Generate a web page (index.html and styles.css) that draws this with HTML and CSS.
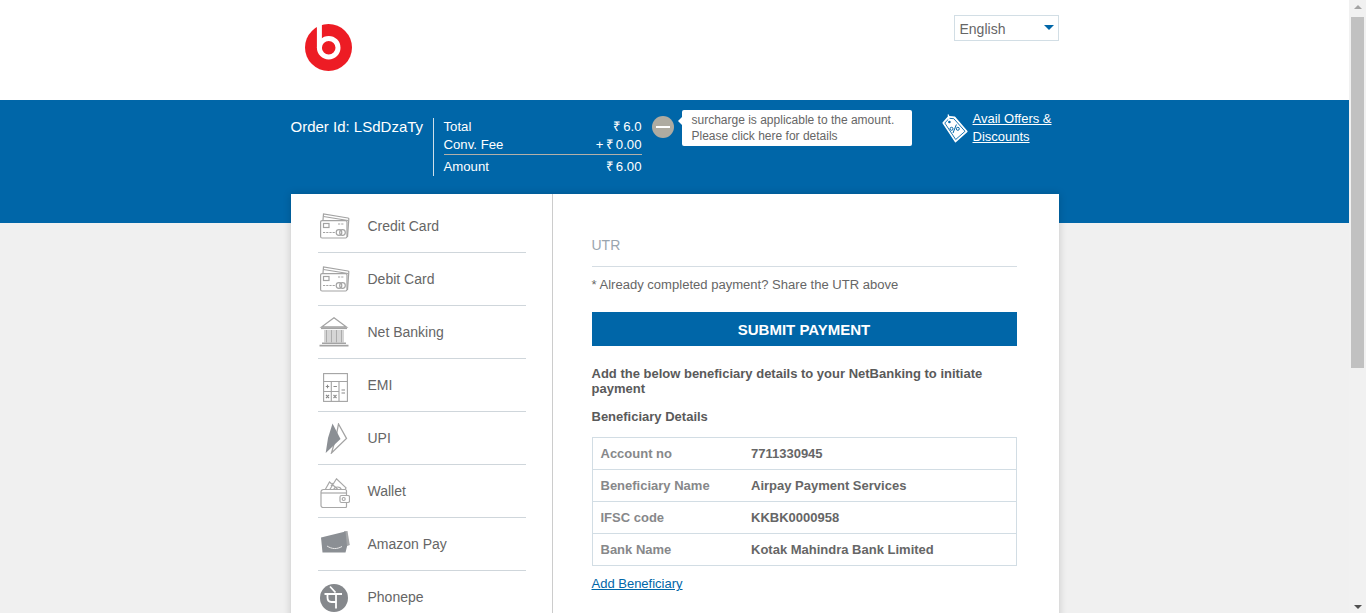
FILE: index.html
```html
<!DOCTYPE html>
<html lang="en">
<head>
<meta charset="utf-8">
<title>Payment</title>
<link rel="stylesheet" href="styles.css">
</head>
<body>
<div class="app">
  <div class="page">
    <header class="top">
      <div class="wrap top-inner">
        <svg class="logo" viewBox="0 0 47 47" aria-label="Logo">
          <circle cx="23.500" cy="23.500" r="23.500" fill="#ed1c24"/>
          <circle cx="23.700" cy="23.700" r="9.300" fill="none" stroke="#fff" stroke-width="5"/>
          <path d="M14.400 0v24" stroke="#fff" stroke-width="5" fill="none"/>
        </svg>
        <div class="lang"><span>English</span><i class="caret"></i></div>
      </div>
    </header>
    <section class="band">
      <div class="wrap band-inner">
        <div class="order">Order Id: LSdDzaTy</div>
        <div class="totals">
          <div class="t-row"><span>Total</span><span class="t-val">₹ 6.0</span></div>
          <div class="t-row t-fee"><span>Conv. Fee</span><span class="t-val">+ ₹ 0.00</span></div>
          <div class="t-row t-amt"><span>Amount</span><span class="t-val">₹ 6.00</span></div>
        </div>
        <div class="minus"><i></i></div>
        <div class="tip">surcharge is applicable to the amount.<br>Please click here for details</div>
        <div class="offers">
          <svg class="tag" viewBox="0 0 26 29">
            <path d="M1 8.800 6.700 2.500 12.500 3 25 17.500 13.500 27.800Z" fill="#fff" stroke="#fff" stroke-width="1.200" stroke-linejoin="round"/>
            <path d="M2.800 9 7.300 4.300 11.800 4.700 23 17.300 13.700 25.500Z" fill="none" stroke="#0066a8" stroke-width=".9"/>
            <path d="M6.300 .5 7.200 7.500" stroke="#fff" stroke-width="1.400" fill="none"/>
            <circle cx="7.400" cy="8" r="1.300" fill="#0066a8"/>
            <circle cx="9.500" cy="14.800" r="1.500" fill="none" stroke="#0066a8"/>
            <circle cx="15.800" cy="14.800" r="1.500" fill="none" stroke="#0066a8"/>
            <path d="M11 19 14.400 10.500" stroke="#0066a8" fill="none"/>
          </svg>
          <a class="offers-link" href="#">Avail Offers &amp;<br>Discounts</a>
        </div>
      </div>
    </section>
    <main class="wrap card">
      <nav class="nav">
        <div class="nav-item">
          <span class="ico"><svg width="30" height="26" viewBox="0 0 30 26"><g fill="none" stroke="#a3a3a3" stroke-width="1.200"><path d="M3 7 3.500 1 28 5a1 1 0 0 1 .8 1.200L27.500 24"/><path d="M3.500 3.500 28 7.500"/><rect x=".6" y="7.600" width="26.400" height="17.400" rx="1.500" fill="#fff"/><rect x="3.500" y="10.500" width="5.500" height="4"/><path d="M18 11h6M3 19.500h12" stroke-dasharray="2.200 1"/><circle cx="19" cy="19.500" r="2.800"/><circle cx="22.500" cy="19.500" r="2.800"/></g></svg></span>
          <span>Credit Card</span>
        </div>
        <div class="nav-item">
          <span class="ico"><svg width="30" height="26" viewBox="0 0 30 26"><g fill="none" stroke="#a3a3a3" stroke-width="1.200"><path d="M3 7 3.500 1 28 5a1 1 0 0 1 .8 1.200L27.500 24"/><path d="M3.500 3.500 28 7.500"/><rect x=".6" y="7.600" width="26.400" height="17.400" rx="1.500" fill="#fff"/><rect x="3.500" y="10.500" width="5.500" height="4"/><path d="M18 11h6M3 19.500h12" stroke-dasharray="2.200 1"/><circle cx="19" cy="19.500" r="2.800"/><circle cx="22.500" cy="19.500" r="2.800"/></g></svg></span>
          <span>Debit Card</span>
        </div>
        <div class="nav-item">
          <span class="ico ico-bank"><svg width="30" height="30" viewBox="0 0 30 30"><path d="M15 .8 27.500 10H2.500Z" fill="none" stroke="#a3a3a3" stroke-width="1.300"/><path d="M2 10.500h26v1.600H2Z" fill="#a3a3a3"/><path d="M6 13v12.500M7.500 13v12.500M9 13v12.500M11 13v12.500M12.500 13v12.500M14 13v12.500M16 13v12.500M17.500 13v12.500M19 13v12.500M21 13v12.500M22.500 13v12.500M24 13v12.500" stroke="#a3a3a3" stroke-width=".9"/><path d="M3 25.500h24v1.500H3ZM.5 27.800h29v1.700H.5Z" fill="#a3a3a3"/></svg></span>
          <span>Net Banking</span>
        </div>
        <div class="nav-item">
          <span class="ico ico-calc"><svg width="25" height="29" viewBox="0 0 25 29"><g fill="none" stroke="#a3a3a3" stroke-width="1.100"><rect x=".6" y=".6" width="23.800" height="27.800"/><path d="M.6 8.500h23.800M8.300 8.500v20M16 8.500v20M.6 18.500H16"/><path d="M2.800 13.500h3.400M4.500 11.800v3.400M10.500 13.500h3.400M3 22l3 3M6 22l-3 3M10.500 22l3 3M13.500 22l-3 3M18.500 17h3.500M18.500 20h3.500" stroke="#8a8a8a"/></g></svg></span>
          <span>EMI</span>
        </div>
        <div class="nav-item">
          <span class="ico ico-upi"><svg width="23" height="31" viewBox="0 0 23 31"><path d="M13.500 1 21.500 15.500 6.500 30 11 14Z" fill="#fff" stroke="#a3a3a3" stroke-width="1.300"/><path d="M7.500 .5 15.500 16 .7 30 3 15Z" fill="#8b8f94"/></svg></span>
          <span>UPI</span>
        </div>
        <div class="nav-item">
          <span class="ico ico-wallet"><svg width="30" height="30" viewBox="0 0 30 30"><g fill="none" stroke="#a8a8a8" stroke-width="1.200"><path d="M5 12 9.500 4l9 8M9.500 12 16.500 .8 26 9.800 25 12M13.500 12c1-4 7-4 8 0M13 5l-2 3"/><path d="M1 14a2.500 2.500 0 0 1 2.500-2.500H25a1.500 1.500 0 0 1 1.500 1.500v15.500a1 1 0 0 1-1 1H3a2 2 0 0 1-2-2Z" fill="#fff"/><path d="M1 15h25.500"/><rect x="20" y="17.500" width="9.500" height="7" rx="1.500" fill="#fff"/><circle cx="23.700" cy="21" r="1.500"/></g></svg></span>
          <span>Wallet</span>
        </div>
        <div class="nav-item">
          <span class="ico ico-amazon"><svg width="30" height="22" viewBox="0 0 30 22"><path d="M24 .2 26 15.500 29.800 14 27.500 0Z" fill="#a5a7a9"/><path d="M1 6.500 25.500 .5 27 15.500 25.500 21.500H2.500Z" fill="#8b8f94"/><path d="M7 15c5 3.300 10 3.300 15 .5" stroke="#e8e8e8" stroke-width="1" fill="none"/></svg></span>
          <span>Amazon Pay</span>
        </div>
        <div class="nav-item">
          <span class="ico ico-phonepe"><svg width="28" height="28" viewBox="0 0 28 28"><circle cx="14" cy="14" r="14" fill="#85888c"/><path d="M4.500 10h17.500M16 10v14.500M16 18h-4.500C9 18 7.500 16 7.500 13.500V10M10 2.500l5.500 6" fill="none" stroke="#fff" stroke-width="1.800"/></svg></span>
          <span>Phonepe</span>
        </div>
      </nav>
      <div class="panel">
        <div class="field">UTR</div>
        <p class="help">* Already completed payment? Share the UTR above</p>
        <button class="submit" type="button">SUBMIT PAYMENT</button>
        <p class="strong lead">Add the below beneficiary details to your NetBanking to initiate payment</p>
        <p class="strong sub">Beneficiary Details</p>
        <table class="details">
          <tr><th>Account no</th><td>7711330945</td></tr>
          <tr><th>Beneficiary Name</th><td>Airpay Payment Services</td></tr>
          <tr><th>IFSC code</th><td>KKBK0000958</td></tr>
          <tr><th>Bank Name</th><td>Kotak Mahindra Bank Limited</td></tr>
        </table>
        <a class="add" href="#">Add Beneficiary</a>
      </div>
    </main>
  </div>
  <aside class="scrollbar">
    <i class="arrow up"></i>
    <div class="track"><div class="thumb"></div></div>
    <i class="arrow down"></i>
  </aside>
</div>
</body>
</html>
```

FILE: styles.css
```css
* { box-sizing: border-box; }
html, body { margin: 0; height: 100%; overflow: hidden; }
body { font-family: "Liberation Sans", Arial, sans-serif; color: #666; background: #f0f0f0; }
.app { display: flex; height: 613px; overflow: hidden; }
.page { flex: 1; min-width: 0; overflow: hidden; }
.wrap { width: 768px; margin: 0 auto; }

.top { background: #fff; height: 100px; }
.top-inner { display: flex; justify-content: space-between; align-items: flex-start; padding-left: 14px; }
.logo { width: 47px; height: 47px; margin-top: 24px; }
.lang { margin-top: 15px; width: 105px; height: 26px; border: 1px solid #d2dee5; display: flex; justify-content: space-between; padding: 2px 3px 0 5px; align-items: center; font-size: 14px; color: #666; }
.caret { width: 0; height: 0; border: 5px solid transparent; border-top: 5px solid #0066a8; border-bottom: 0; margin: -3px 1px 0 0; }

.band { background: #0066a8; height: 123px; color: #fff; }
.band-inner { display: flex; align-items: flex-start; }
.order { width: 143px; height: 58px; margin-top: 18px; font-size: 15px; line-height: 18px; flex: none; border-right: 1px solid #cfdfe9; }
.totals { width: 198px; margin: 18px 0 0 10px; font-size: 13.200px; flex: none; }
.t-row { display: flex; justify-content: space-between; height: 18px; line-height: 18px; }
.t-val { word-spacing: -1.500px; }
.t-fee { height: 19px; border-bottom: 1px solid #b4b0a8; }
.t-amt { margin-top: 3px; }
.minus { width: 22px; height: 22px; border-radius: 50%; background: #aeaba1; margin: 16px 0 0 10px; display: flex; align-items: center; justify-content: center; flex: none; }
.minus i { width: 14px; height: 2px; background: #fff; }
.tip { position: relative; width: 230px; height: 36px; margin: 10px 0 0 8px; padding: 2px 0 0 10px; background: #fff; border-radius: 2px; color: #666; font-size: 12px; line-height: 16px; flex: none; }
.tip::before { content: ""; position: absolute; left: -4px; top: 7px; border: 4px solid transparent; border-left: 0; border-right-color: #fff; }
.offers { display: flex; margin: 10px 0 0 30px; flex: none; }
.tag { width: 26px; height: 29px; margin: 4px 5px 0 0; flex: none; }
.offers-link { color: #fff; font-size: 13px; line-height: 18px; }

.card { display: flex; background: #fff; margin-top: -29px; position: relative; height: 600px; box-shadow: 0 0 8px rgba(0, 0, 0, .18); }
.nav { width: 262px; flex: none; border-right: 1px solid #ccc; padding: 6px 26px 0 27px; }
.nav-item { display: flex; align-items: center; height: 53px; border-bottom: 1px solid #cfd6db; font-size: 14px; color: #666; }
.ico { width: 50px; flex: none; display: flex; padding-left: 2px; }
.ico-bank { padding-left: 1px; }
.ico-calc { padding-left: 5px; padding-top: 4px; height: 33px; }
.ico-upi { padding-left: 7px; }
.ico-wallet { padding-top: 4px; height: 34px; }
.ico-amazon { padding-bottom: 5px; height: 27px; }
.ico-phonepe { padding-top: 2px; height: 30px; }

.panel { flex: 1; padding: 30px 42px 0 39px; min-width: 0; }
.field { height: 43px; border-bottom: 1px solid #d5dde3; font-size: 14px; line-height: 42px; color: #9aa5ae; }
.help { margin: 9px 0 0; font-size: 13.050px; line-height: 18px; color: #666; }
.submit { display: block; width: 100%; height: 34px; margin: 18px 0 0; padding: 1px 0 0; border: 0; background: #0066a8; color: #fff; font: bold 15px "Liberation Sans", Arial, sans-serif; }
.strong { font-weight: bold; font-size: 13px; line-height: 15px; color: #5a5a5a; margin: 0; }
.lead { margin-top: 20px; }
.sub { margin-top: 13px; }
.details { width: 100%; margin-top: 13px; border-collapse: collapse; border: 1px solid #d2dde4; font-size: 13px; table-layout: fixed; }
.details tr { height: 32px; border-bottom: 1px solid #d2dde4; }
.details th { width: 159px; padding: 0 0 0 8px; text-align: left; color: #87888a; }
.details td { padding: 0; font-weight: bold; color: #666; }
.add { display: inline-block; margin-top: 10px; color: #0066a8; font-size: 13px; line-height: 16px; }

.scrollbar { width: 17px; flex: none; background: #f1f1f1; display: flex; flex-direction: column; align-items: center; }
.track { flex: 1; width: 100%; padding: 0 2px; }
.thumb { width: 13px; height: 351px; background: #c1c1c1; }
.arrow { flex: none; width: 0; height: 17px; border: 4px solid transparent; border-width: 0 4px; position: relative; }
.arrow::after { content: ""; position: absolute; left: -4px; border: 4px solid transparent; }
.up::after { top: 5px; border-top: 0; border-bottom-color: #a3a3a3; }
.down::after { bottom: 4px; border-bottom: 0; border-top-color: #505050; }
```
